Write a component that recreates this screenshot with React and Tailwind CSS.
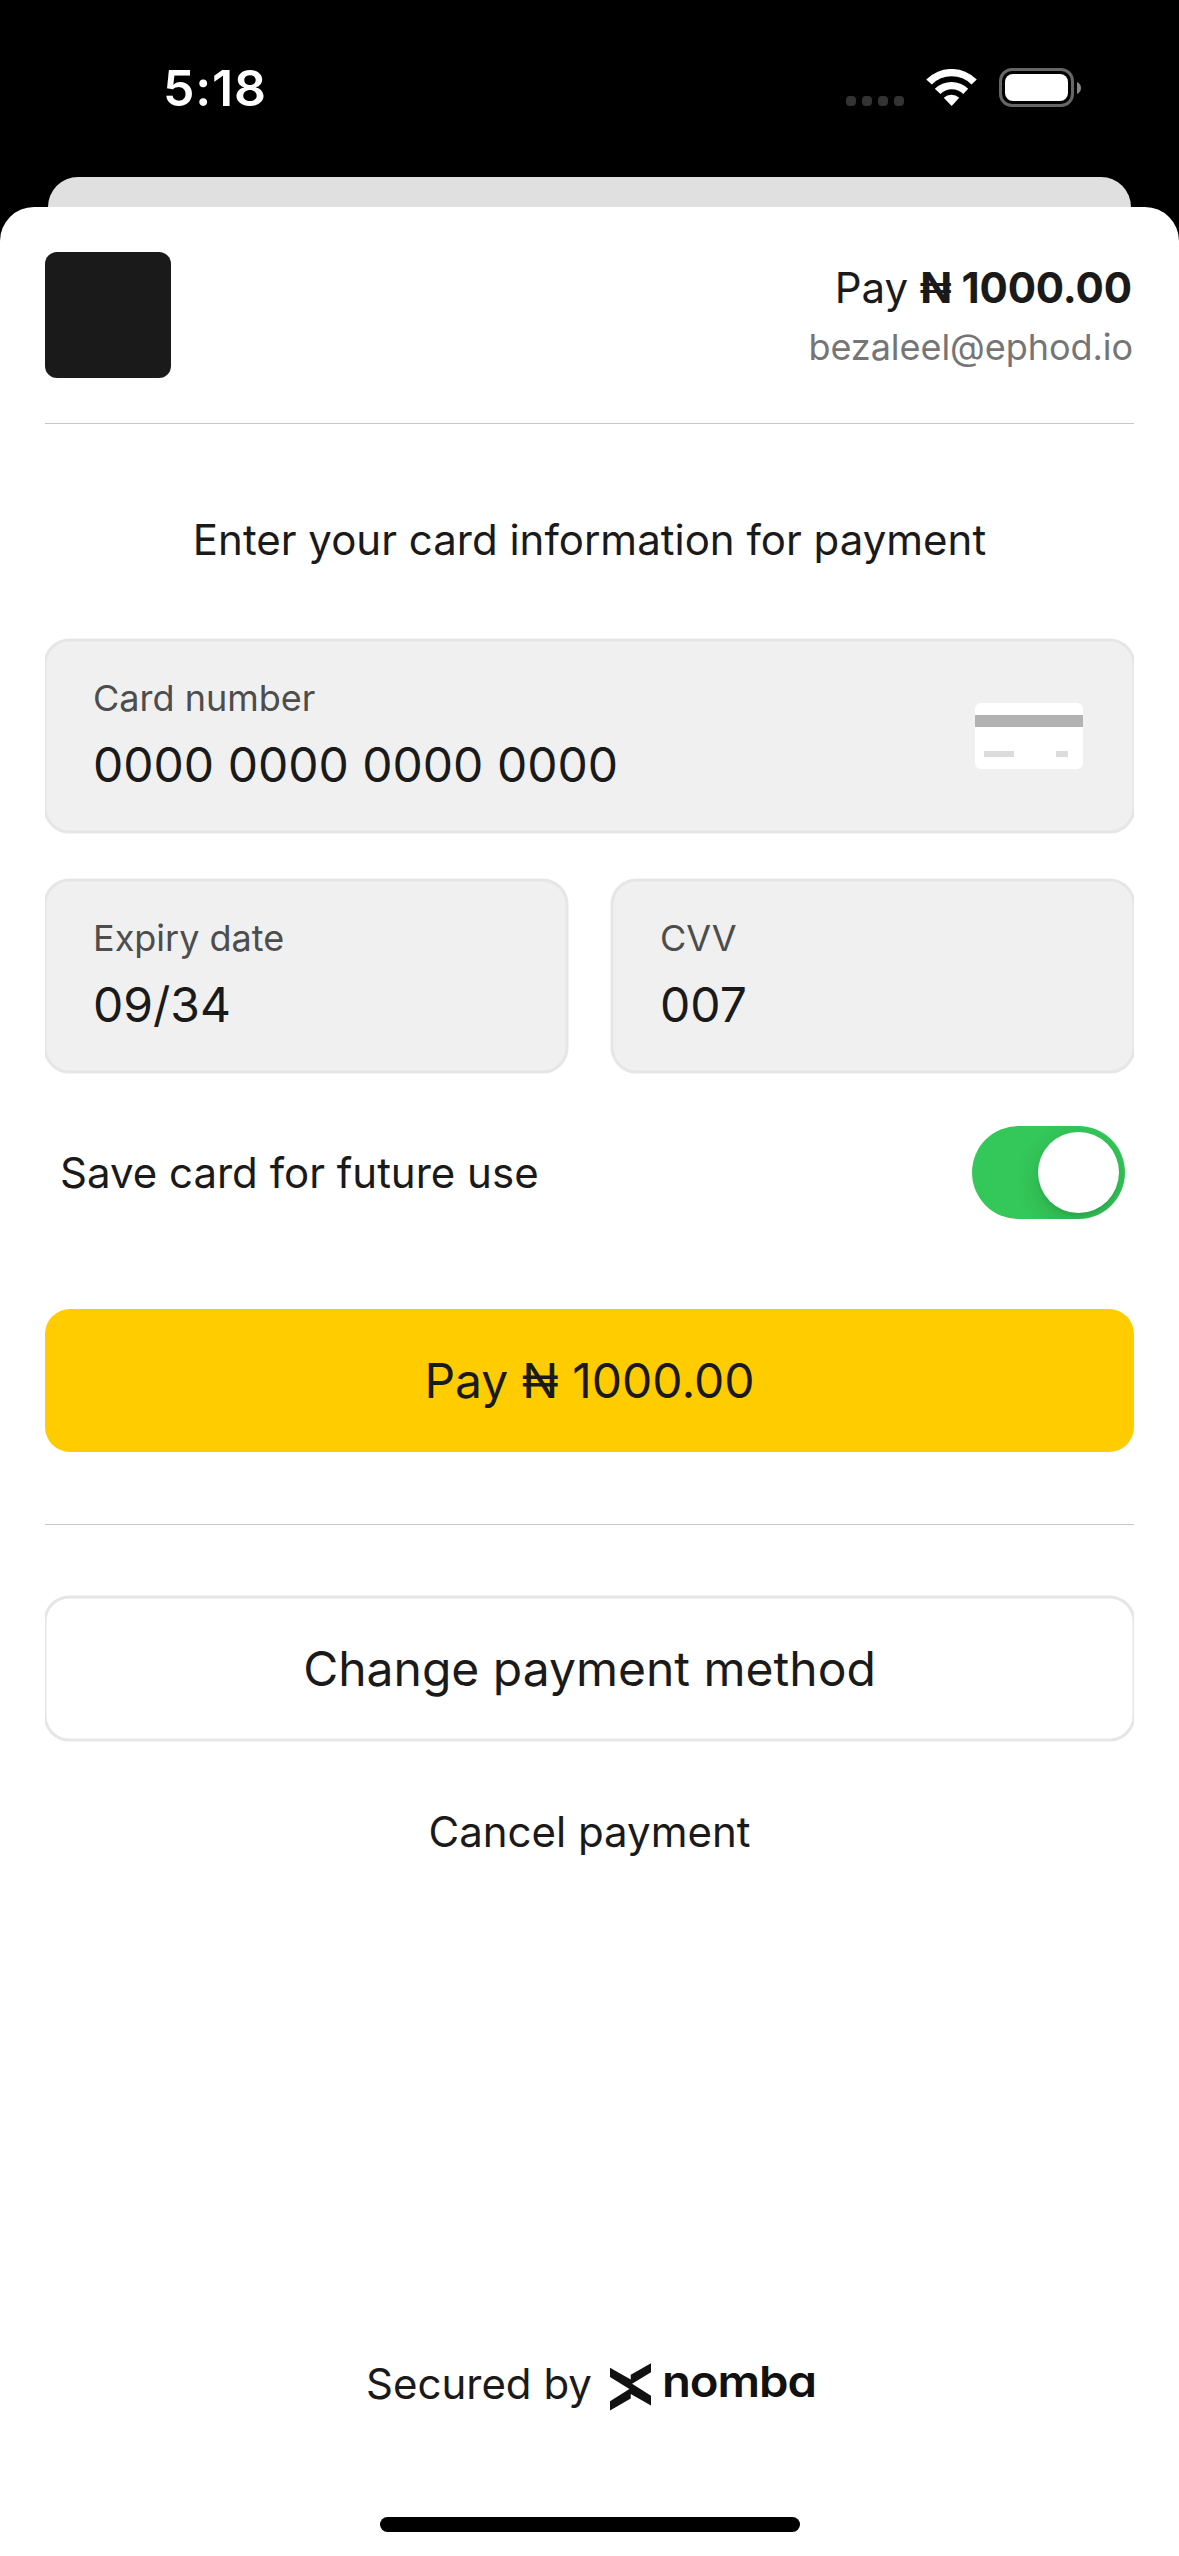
function WifiIcon() {
  return (
    <svg viewBox="0 0 153 112" className="h-[37px] w-[51px]" fill="white">
      <path d="M0 32 A107 107 0 0 1 153 32 L137 47 A84 84 0 0 0 17 47 Z" />
      <path d="M26 60 A72 72 0 0 1 127 60 L112 76 A48 48 0 0 0 43 76 Z" />
      <path d="M53 87 A36 36 0 0 1 100 87 L77 112 Z" />
    </svg>
  );
}

function Battery() {
  return (
    <div className="flex items-center gap-[3px]">
      <div className="h-[39px] w-[75px] rounded-[13px] border-[3px] border-[#666666] p-[3px]">
        <div className="h-full w-full rounded-[8px] bg-white" />
      </div>
      <svg viewBox="0 0 4 12" className="h-[12px] w-[4px]" fill="#858585">
        <path d="M0 0 C2.6 1 4 3.4 4 6 C4 8.6 2.6 11 0 12 Z" />
      </svg>
    </div>
  );
}

function StatusBar() {
  return (
    <div className="flex h-[177px] shrink-0 items-start justify-between pt-[57px] pr-[98px] pl-[163px] text-white">
      <div className="text-[50px] leading-[62px] font-semibold tracking-[0.8px]">5:18</div>
      <div className="flex items-center pt-[11px]">
        <div className="mt-[27px] flex gap-[6px]">
          {[0, 1, 2, 3].map((i) => (
            <div key={i} className="h-[10px] w-[10px] rounded-[4px] bg-[#333333]" />
          ))}
        </div>
        <div className="ml-[22px]">
          <WifiIcon />
        </div>
        <div className="ml-[22px]">
          <Battery />
        </div>
      </div>
    </div>
  );
}

function CardIcon() {
  return (
    <svg viewBox="0 0 108 66" className="h-[66px] w-[108px]">
      <rect width="108" height="66" rx="6" fill="#ffffff" />
      <rect y="12" width="108" height="12" fill="#b2b2b2" />
      <rect x="9" y="48" width="30" height="6" fill="#dcdcdc" />
      <rect x="81" y="48" width="12" height="6" fill="#dcdcdc" />
    </svg>
  );
}

const outline =
  "relative isolate before:absolute before:-inset-[2px] before:-right-[1px] before:-bottom-[1px] before:-z-10 before:translate-x-[0.5px] before:translate-y-[0.5px] before:rounded-[26px] before:border-[3px] before:border-[#e6e6e6] before:content-['']";

function Field({ label, value, icon }) {
  return (
    <div
      className={`${outline} flex h-[192px] flex-1 items-start justify-between pt-9 pr-[51px] pl-12 before:bg-[#f0f0f0]`}
    >
      <div className="flex flex-col gap-4">
        <div className="text-[36px] leading-[44px] text-[#4d4d4d]">{label}</div>
        <div className="text-[48px] leading-[58px]">{value}</div>
      </div>
      {icon && <div className="pt-[27px]">{icon}</div>}
    </div>
  );
}

function Toggle() {
  return (
    <div className="flex h-[93px] w-[153px] items-center justify-end overflow-hidden rounded-full bg-[#34c759] pr-[6px]">
      <div className="h-[81px] w-[81px] rounded-full bg-white shadow-[0_9px_24px_rgba(0,0,0,0.15),0_3px_3px_rgba(0,0,0,0.06)]" />
    </div>
  );
}

function NombaLogo() {
  return (
    <div className="flex items-start">
      <svg viewBox="0 0 124 142" className="mt-[5px] h-[47.5px] w-[41.5px]" fill="#111111">
        <path d="M0 14 L62 49 V35 L124 0 V27 L66 62 L124 99 V128 L62 93 V106 L0 142 V114 L58 78 L0 42 Z" />
      </svg>
      <span className="ml-[10.5px] inline-block origin-left scale-x-[1.1] text-[43px] leading-[46px] font-semibold tracking-[-1px] text-[#111111] [font-feature-settings:'cv11']">
        nomba
      </span>
    </div>
  );
}

export default function App() {
  return (
    <div className="flex h-[2556px] w-[1179px] flex-col overflow-hidden bg-black font-['Inter',sans-serif] text-[#1a1a1a]">
      <StatusBar />
      <div className="mr-12 ml-12 h-[30px] shrink-0 rounded-t-[30px] bg-[#e0e0e0]" />
      <div className="flex flex-1 flex-col rounded-t-[34px] bg-white px-[45px] pt-[45px]">
        <header className="flex h-[172px] shrink-0 items-start justify-between border-b border-[#c6c6c6]">
          <div className="h-[126px] w-[126px] rounded-[12px] bg-[#1a1a1a]" />
          <div className="flex flex-col items-end gap-3 pt-[10px] pr-px">
            <div className="pr-px text-[42px] leading-[51px]">
              Pay <span className="font-bold tracking-[-0.1px]">₦ 1000.00</span>
            </div>
            <div className="text-[36px] leading-[44px] tracking-[-0.05px] text-[#757575]">bezaleel@ephod.io</div>
          </div>
        </header>

        <main className="-my-1 flex flex-1 flex-col overflow-x-clip pt-[94px]">
          <h1 className="text-center text-[42px] leading-[51px]">Enter your card information for payment</h1>
          <div className="mt-[75px] flex">
            <Field label="Card number" value="0000 0000 0000 0000" icon={<CardIcon />} />
          </div>
          <div className="mt-12 flex gap-[45px]">
            <Field label="Expiry date" value="09/34" />
            <Field label="CVV" value="007" />
          </div>
          <div className="mt-[54px] flex items-center justify-between pr-[9px] pl-[15px]">
            <div className="text-[42px] leading-[51px]">Save card for future use</div>
            <Toggle />
          </div>
          <button className="mt-[90px] h-[143px] rounded-[25px] bg-[#ffcc00] text-[48px] leading-[58px]">
            Pay ₦ 1000.00
          </button>
          <div className="mt-[72px] h-px bg-[#c6c6c6]" />
          <button className={`${outline} mt-[72px] h-[143px] text-[48px] leading-[58px]`}>
            Change payment method
          </button>
          <button className="mt-[66px] text-[42px] leading-[51px]">Cancel payment</button>
        </main>

        <footer className="flex flex-col items-center">
          <div className="flex h-[51px] w-full items-start pl-[321px]">
            <span className="mr-[18px] text-[42px] leading-[51px]">Secured by</span>
            <NombaLogo />
          </div>
          <div className="mt-[108px] mb-6 h-[15px] w-[420px] rounded-full bg-black" />
        </footer>
      </div>
    </div>
  );
}
